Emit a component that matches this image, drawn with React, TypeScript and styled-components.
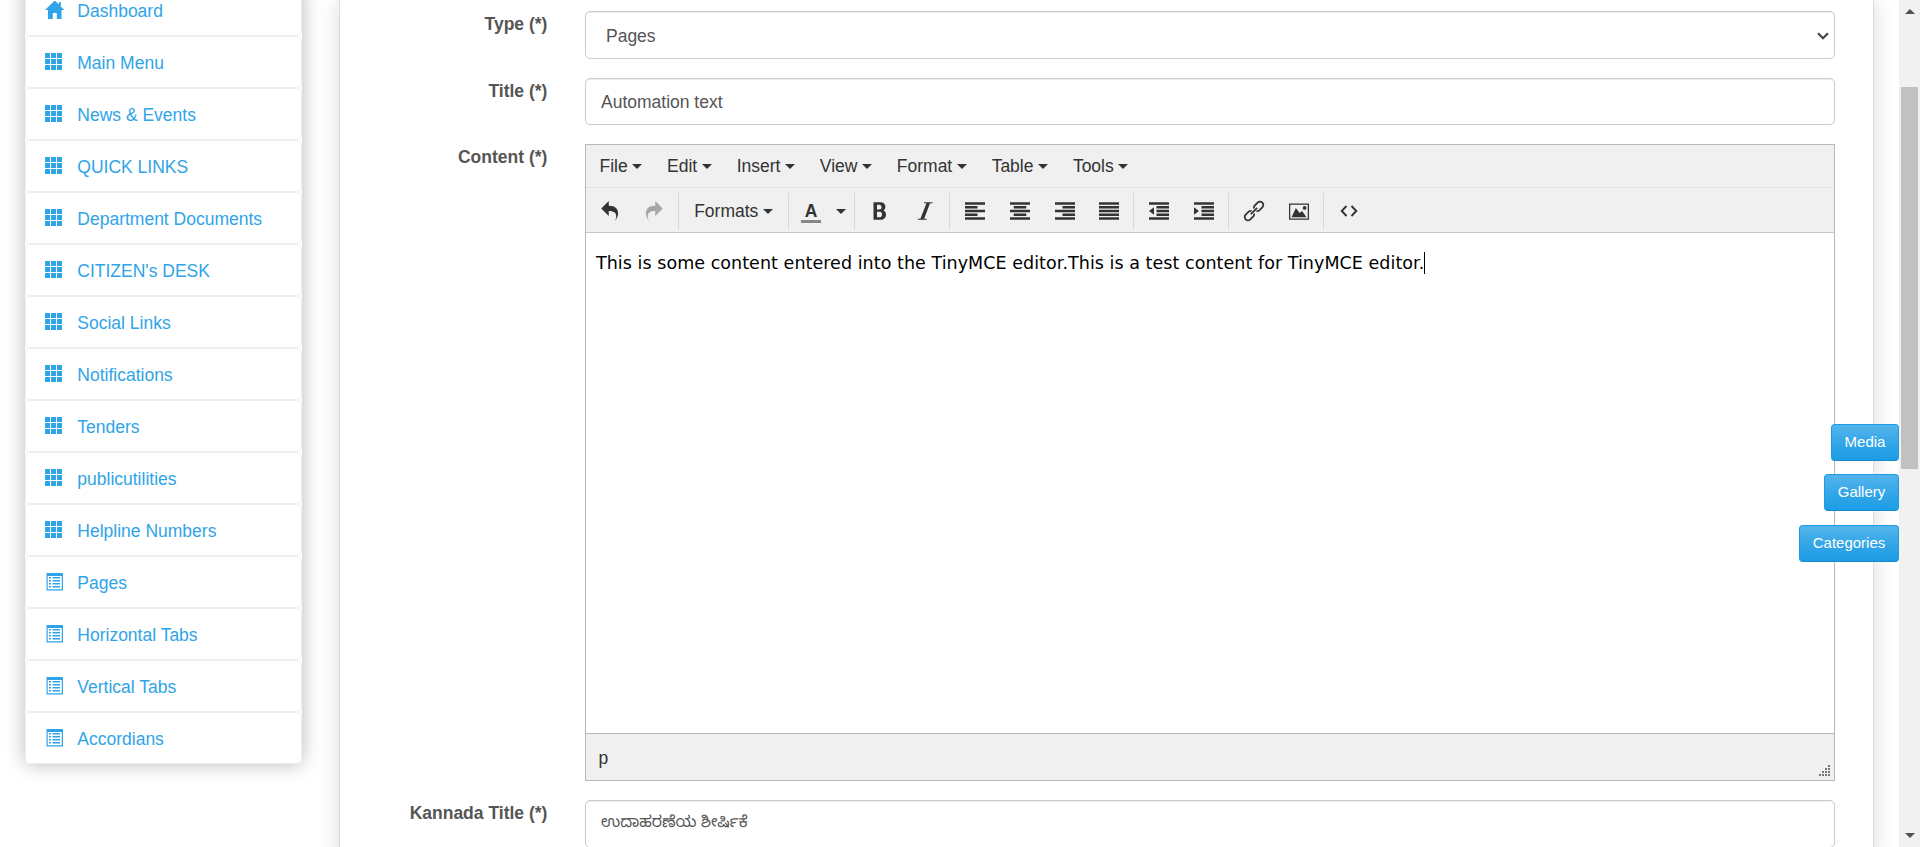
import React from "react";
import styled, { createGlobalStyle } from "styled-components";

const Global = createGlobalStyle`
  *, *::before, *::after { box-sizing: border-box; }
  html, body { margin: 0; height: 100%; overflow: hidden; background: #fff; }
  body { font-family: "Liberation Sans", Arial, sans-serif; font-size: 17.5px; line-height: 25px; color: #555; }
`;

const Page = styled.div`
  display: flex;
  height: 847px;
  overflow: hidden;
  position: relative;
`;

const Sidebar = styled.nav`
  flex: none;
  width: 277px;
  height: 780px;
  margin: -16px 37px 0 25px;
  border-radius: 5px;
  background: #fff;
  box-shadow: 0 0 20px rgba(0, 0, 0, 0.28);
`;

const NavItem = styled.a`
  display: flex;
  align-items: center;
  height: 52px;
  padding: 2px 0 0 19px;
  border: 1px solid #eee;
  border-radius: 5px;
  color: #2fa4e7;
  text-decoration: none;
  white-space: nowrap;
  svg { flex: none; width: 20px; height: 18px; margin: -3px 12.3px 0 0; }
`;

const Panel = styled.main`
  flex: none;
  width: 1535px;
  height: 860px;
  padding: 11px 38px 0 0;
  border: solid #ddd;
  border-width: 0 1px;
  background: #fff;
  box-shadow: 0 0 20px rgba(0, 0, 0, 0.15);
`;

const Row = styled.div<{ $h: number; $gap: number }>`
  display: flex;
  height: ${(p) => p.$h}px;
  margin-bottom: ${(p) => p.$gap}px;
`;

const Label = styled.label`
  width: 207.4px;
  flex: none;
  margin-right: 37.6px;
  padding-top: 1px;
  text-align: right;
  font-weight: bold;
`;

const Field = styled.div<{ $indent?: number }>`
  flex: 1;
  display: flex;
  align-items: center;
  justify-content: space-between;
  padding: 2px 5px 0 ${(p) => p.$indent ?? 15}px;
  border: 1px solid #ccc;
  border-radius: 5px;
  background: #fff;
  box-shadow: inset 0 1px 1px rgba(0, 0, 0, 0.075);
`;

const Kannada = styled.span`
  font-family: "Noto Sans Kannada", "Liberation Sans", sans-serif;
  font-size: 15.7px;
  padding-bottom: 2px;
`;

const Editor = styled.section`
  flex: 1;
  display: flex;
  flex-direction: column;
  border: 1px solid #b8b8b8;
  background: #fff;
  color: #333;
`;

const MenuBar = styled.div`
  display: flex;
  align-items: center;
  gap: 24.8px;
  height: 43px;
  padding: 0 0 0 13.5px;
  background: #f0f0f0;
  border-bottom: 1px solid #e2e2e2;
`;

const MenuButton = styled.span`
  display: flex;
  align-items: center;
  gap: 4.6px;
  white-space: nowrap;
`;

const Caret = styled.i`
  border: 5px solid transparent;
  border-top-color: #333;
  border-bottom: 0;
`;

const ToolBar = styled.div`
  display: flex;
  align-items: center;
  height: 45px;
  padding-top: 2px;
  background: #f0f0f0;
  border-bottom: 1px solid #c5c5c5;
`;

const Group = styled.div<{ $w: number; $first?: boolean; $last?: boolean }>`
  display: flex;
  align-items: center;
  gap: ${(p) => (p.$first ? 24 : 24.7)}px;
  width: ${(p) => p.$w}px;
  height: 37px;
  padding-left: ${(p) => (p.$first ? 13.7 : 15.2)}px;
  border-right: ${(p) => (p.$last ? "0" : "1px solid #d8d8d8")};
  svg { flex: none; width: 20px; height: 20px; }
`;

const ColorLetter = styled.span`
  width: 20px;
  height: 19px;
  margin: 4px -9.5px 0 -3.2px;
  border-bottom: 3px solid #888;
  text-align: center;
  font-weight: bold;
  line-height: 14px;
`;

const Content = styled.div`
  flex: 1;
  padding: 18px 10px;
  font-family: "DejaVu Sans", Verdana, sans-serif;
  font-size: 17.5px;
  letter-spacing: 0.046px;
  color: #000;
  white-space: nowrap;
`;

const TextCursor = styled.span`
  display: inline-block;
  width: 1px;
  height: 22px;
  vertical-align: -5px;
  background: #000;
`;

const StatusBar = styled.div`
  display: flex;
  justify-content: space-between;
  align-items: center;
  height: 47px;
  padding: 2px 3px 0 12.5px;
  border-top: 1px solid #b8b8b8;
  background: #f0f0f0;
  svg { align-self: flex-end; margin-bottom: 3px; }
`;

const FloatingActions = styled.div`
  position: absolute;
  top: 424px;
  right: 21px;
  display: flex;
  flex-direction: column;
  align-items: flex-end;
  gap: 13.4px;
`;

const Action = styled.button<{ $w: number }>`
  width: ${(p) => p.$w}px;
  height: 37px;
  padding: 0 0 2px;
  border: 1px solid #1d9ce5;
  border-bottom-color: #178acc;
  border-radius: 4px;
  background: linear-gradient(#54b4eb, #2fa4e7 60%, #1d9ce5);
  color: #fff;
  font: 15px "Liberation Sans", Arial, sans-serif;
`;

const ScrollTrack = styled.div`
  flex: none;
  width: 21px;
  height: 847px;
  margin-left: 25px;
  display: flex;
  flex-direction: column;
  align-items: center;
  background: #f1f1f1;
`;

const ScrollArrow = styled.i<{ $down?: boolean }>`
  margin-top: ${(p) => (p.$down ? 364 : 9)}px;
  border: 5px solid transparent;
  ${(p) => (p.$down ? "border-top-color: #505050; border-bottom: 0;" : "border-bottom-color: #505050; border-top: 0;")}
`;

const ScrollThumb = styled.div`
  width: 17px;
  height: 382px;
  margin-top: 73px;
  background: #c1c1c1;
`;

const HomeIcon = () => (
  <svg viewBox="0 0 20 18" fill="currentColor">
    <path d="M9.800-.5 0 9h3v9h4.800v-6h4v6h4.700V9h2.800L15.800 5.500V1h-2v2.500z" />
  </svg>
);

const GridIcon = () => (
  <svg viewBox="0 0 20 18" fill="currentColor">
    {[0, 6, 12].map((y) => [0, 6, 12].map((x) => <rect key={`${x}-${y}`} x={x} y={y} width="5" height="5" />))}
  </svg>
);

const ListIcon = () => (
  <svg viewBox="0 0 20 18" fill="currentColor">
    <path fillRule="evenodd" d="M1.500-.5H18V17.500H1.500zM2.700 3v13.300h14.100V3z" />
    <path d="M4 4h2v1.500H4zM7.500 4H15v1.500H7.500zM4 7h2v1.500H4zM7.500 7H15v1.500H7.500zM4 10h2v1.500H4zM7.500 10H15v1.500H7.500zM4 13h2v1.500H4zM7.500 13H15v1.500H7.500z" />
  </svg>
);

const Glyph = ({ d, color = "#333" }: { d: string; color?: string }) => (
  <svg viewBox="0 0 16 16" fill={color} fillRule="evenodd"><path d={d} /></svg>
);

const glyphs = {
  undo: "M11.904 16c1.777-3.219 2.076-8.13-4.904-7.966v3.966l-6-6 6-6v3.881c8.359-.218 9.29 7.378 4.904 12.119z",
  redo: "M9 3.881V0l6 6-6 6V8.034C2.020 7.870 2.319 12.781 4.096 16-.29 11.259.641 3.663 9 3.881z",
  bold: "M2.800 1h5.500c2.600 0 4 1.500 4 3.600 0 1.300-.6 2.300-1.500 2.900 1.300.6 2 1.700 2 3.300C12.800 13.400 11.100 15 8.400 15H2.800zm2.800 2v3.700h1.900c1.100 0 1.700-.7 1.700-1.800S8.600 3 7.500 3zm0 5.600V13h2.200c1.200 0 1.800-.9 1.800-2.200s-.6-2.200-1.800-2.200z",
  italic: "M14 1v.8h-2L7.300 14.200h2v.8h-7v-.8h2L9.200 1.800h-2V1z",
  left: "M0 1h16v2H0zM0 4h10v2H0zM0 7h16v2H0zM0 10h10v2H0zM0 13h16v2H0z",
  center: "M0 1h16v2H0zM3 4h10v2H3zM0 7h16v2H0zM3 10h10v2H3zM0 13h16v2H0z",
  right: "M0 1h16v2H0zM6 4h10v2H6zM0 7h16v2H0zM6 10h10v2H6zM0 13h16v2H0z",
  justify: "M0 1h16v2H0zM0 4h16v2H0zM0 7h16v2H0zM0 10h16v2H0zM0 13h16v2H0z",
  outdent: "M0 1h16v2H0zM6 4h10v2H6zM6 7h10v2H6zM6 10h10v2H6zM0 13h16v2H0zM4 5v6L0 8z",
  indent: "M0 1h16v2H0zM6 4h10v2H6zM6 7h10v2H6zM6 10h10v2H6zM0 13h16v2H0zM0 5v6l4-3z",
  image: "M0 2h16v13H0zM1 3v11h14V3zM2 13l3.500-7.500 3 4 2-1.500L14 13zM11 5.500a1.500 1.500 0 1 0 3 0 1.500 1.500 0 1 0-3 0z",
};

const LinkIcon = () => (
  <svg viewBox="0 0 20 20" fill="none" stroke="#333" strokeWidth="1.800" overflow="visible">
    <g transform="rotate(-45 10 10)">
      <path d="M8.300 8.200A3.200 3.200 0 0 0 5.800 6.700H1.500a3.300 3.300 0 0 0 0 6.600h4.300a3.200 3.200 0 0 0 2.500-1.500M11.700 8.200a3.200 3.200 0 0 1 2.500-1.500h4.300a3.300 3.300 0 0 1 0 6.600h-4.300a3.200 3.200 0 0 1-2.500-1.500M5.500 10h9" />
    </g>
  </svg>
);

const CodeIcon = () => (
  <svg viewBox="0 0 20 20" fill="none" stroke="#333" strokeWidth="1.900">
    <path d="M7.500 5 2.700 10l4.800 5M12.500 5l4.800 5-4.800 5" />
  </svg>
);

const ResizeGrip = () => (
  <svg width="13" height="13" fill="#777">
    {[0, 1, 2, 3].map((r) =>
      Array.from({ length: r + 1 }, (_, c) => <rect key={`${r}-${c}`} x={(3 - c) * 3 + 1} y={r * 3 + 1} width="2" height="2" />)
    )}
  </svg>
);

const navItems: [string, React.FC][] = [
  ["Dashboard", HomeIcon],
  ["Main Menu", GridIcon],
  ["News & Events", GridIcon],
  ["QUICK LINKS", GridIcon],
  ["Department Documents", GridIcon],
  ["CITIZEN's DESK", GridIcon],
  ["Social Links", GridIcon],
  ["Notifications", GridIcon],
  ["Tenders", GridIcon],
  ["publicutilities", GridIcon],
  ["Helpline Numbers", GridIcon],
  ["Pages", ListIcon],
  ["Horizontal Tabs", ListIcon],
  ["Vertical Tabs", ListIcon],
  ["Accordians", ListIcon],
];

export default function App() {
  return (
    <>
      <Global />
      <Page>
        <Sidebar>
          {navItems.map(([name, Icon]) => (
            <NavItem key={name}><Icon />{name}</NavItem>
          ))}
        </Sidebar>
        <Panel>
          <Row $h={48} $gap={19}>
            <Label>Type (*)</Label>
            <Field $indent={20}>
              Pages
              <svg width="12" height="8" fill="none" stroke="#444" strokeWidth="2.200"><path d="m1 1.200 5 5 5-5" /></svg>
            </Field>
          </Row>
          <Row $h={47} $gap={19}>
            <Label>Title (*)</Label>
            <Field>Automation text</Field>
          </Row>
          <Row $h={637} $gap={19}>
            <Label>Content (*)</Label>
            <Editor>
              <MenuBar>
                {["File", "Edit", "Insert", "View", "Format", "Table", "Tools"].map((m) => (
                  <MenuButton key={m}>{m}<Caret /></MenuButton>
                ))}
              </MenuBar>
              <ToolBar>
                <Group $w={93} $first><Glyph d={glyphs.undo} /><Glyph d={glyphs.redo} color="#a6a6a6" /></Group>
                <Group $w={110}><MenuButton>Formats<Caret /></MenuButton></Group>
                <Group $w={66}><ColorLetter>A</ColorLetter><Caret /></Group>
                <Group $w={95}><Glyph d={glyphs.bold} /><Glyph d={glyphs.italic} /></Group>
                <Group $w={184}>
                  <Glyph d={glyphs.left} /><Glyph d={glyphs.center} /><Glyph d={glyphs.right} /><Glyph d={glyphs.justify} />
                </Group>
                <Group $w={95}><Glyph d={glyphs.outdent} /><Glyph d={glyphs.indent} /></Group>
                <Group $w={95}><LinkIcon /><Glyph d={glyphs.image} /></Group>
                <Group $w={60} $last><CodeIcon /></Group>
              </ToolBar>
              <Content>
                This is some content entered into the TinyMCE editor.This is a test content for TinyMCE editor.<TextCursor />
              </Content>
              <StatusBar>p<ResizeGrip /></StatusBar>
            </Editor>
          </Row>
          <Row $h={48} $gap={0}>
            <Label>Kannada Title (*)</Label>
            <Field><Kannada>ಉದಾಹರಣೆಯ ಶೀರ್ಷಿಕೆ</Kannada></Field>
          </Row>
        </Panel>
        <ScrollTrack>
          <ScrollArrow />
          <ScrollThumb />
          <ScrollArrow $down />
        </ScrollTrack>
        <FloatingActions>
          <Action $w={68}>Media</Action>
          <Action $w={75}>Gallery</Action>
          <Action $w={100}>Categories</Action>
        </FloatingActions>
      </Page>
    </>
  );
}
